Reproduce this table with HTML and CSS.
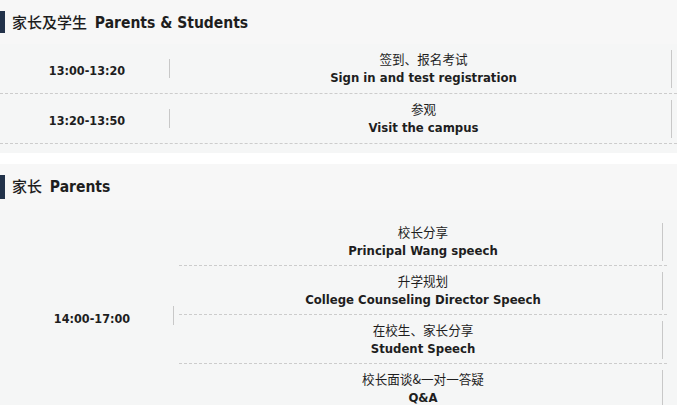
FILE: index.html
```html
<!DOCTYPE html>
<html lang="zh">
<head>
<meta charset="utf-8">
<link rel="stylesheet" href="styles.css">
</head>
<body>
<section class="sec sec-one">
  <h2 class="sec-title"><span class="zh">家长及学生</span> Parents &amp; Students</h2>
  <div class="row">
    <div class="time">13:00-13:20</div>
    <div class="content">
      <div class="cn">签到、报名考试</div>
      <div class="en">Sign in and test registration</div>
    </div>
  </div>
  <div class="row">
    <div class="time">13:20-13:50</div>
    <div class="content">
      <div class="cn">参观</div>
      <div class="en">Visit the campus</div>
    </div>
  </div>
</section>
<section class="sec sec-two">
  <h2 class="sec-title"><span class="zh">家长</span> Parents</h2>
  <div class="group">
    <div class="time time-wide">14:00-17:00</div>
    <div class="items">
      <div class="item">
        <div class="cn">校长分享</div>
        <div class="en">Principal Wang speech</div>
      </div>
      <div class="item">
        <div class="cn">升学规划</div>
        <div class="en">College Counseling Director Speech</div>
      </div>
      <div class="item">
        <div class="cn">在校生、家长分享</div>
        <div class="en">Student Speech</div>
      </div>
      <div class="item">
        <div class="cn">校长面谈&amp;一对一答疑</div>
        <div class="en">Q&amp;A</div>
      </div>
    </div>
  </div>
</section>
</body>
</html>
```
FILE: styles.css
```css
* { box-sizing: border-box; }
html, body { margin: 0; padding: 0; background: #ffffff; }
body {
  width: 677px;
  height: 405px;
  overflow: hidden;
  font-family: "DejaVu Sans Condensed", "DejaVu Sans", "Noto Sans CJK SC", sans-serif;
  font-stretch: condensed;
  color: #1e1e1e;
}
.sec {
  background: #f5f6f6;
}
.sec-one {
  padding-bottom: 9px;
  margin-bottom: 11px;
}
.sec-title {
  margin: 0;
  height: 44px;
  line-height: 44px;
  padding-left: 12px;
  font-size: 15.5px;
  font-weight: bold;
  background: #f7f7f7 linear-gradient(#22324a, #22324a) no-repeat 0 11px / 5px 22px;
}
.sec-title .zh {
  font-family: "Noto Sans CJK SC", sans-serif;
  font-stretch: normal;
  font-weight: 500;
  font-size: 15px;
  margin-right: 3px;
}
.sec-two .sec-title {
  height: 46px;
  line-height: 44px;
  background-position: 0 11px;
  background-size: 5px 24px;
}
.row {
  display: flex;
  height: 50px;
  border-bottom: 1px dashed #cccccc;
}
.time {
  width: 170px;
  flex: none;
  display: flex;
  align-items: center;
  justify-content: center;
  padding-left: 4px;
  padding-top: 3px;
  font-size: 12.5px;
  font-weight: bold;
  background: linear-gradient(#c8c8c8, #c8c8c8) no-repeat right center / 1px 19px;
}
.content, .item {
  flex: 1;
  display: flex;
  flex-direction: column;
  align-items: center;
  justify-content: center;
  text-align: center;
}
.content {
  background: linear-gradient(#c8c8c8, #c8c8c8) no-repeat right 5px top 6px / 1px 38px;
}
.cn {
  font-family: "Noto Sans CJK SC", sans-serif;
  font-stretch: normal;
  font-size: 12.6px;
  line-height: 18px;
}
.en {
  font-size: 13px;
  font-weight: bold;
  line-height: 20px;
}
.group {
  display: flex;
  padding-top: 7px;
}
.time-wide {
  width: 174px;
  padding-left: 10px;
  padding-top: 6px;
}
.items {
  flex: none;
  width: 488px;
  margin-left: 5px;
}
.item {
  height: 49px;
  border-bottom: 1px dashed #cccccc;
  padding-top: 1px;
  background: linear-gradient(#c8c8c8, #c8c8c8) no-repeat right 4px top 6px / 1px 38px;
}
```
